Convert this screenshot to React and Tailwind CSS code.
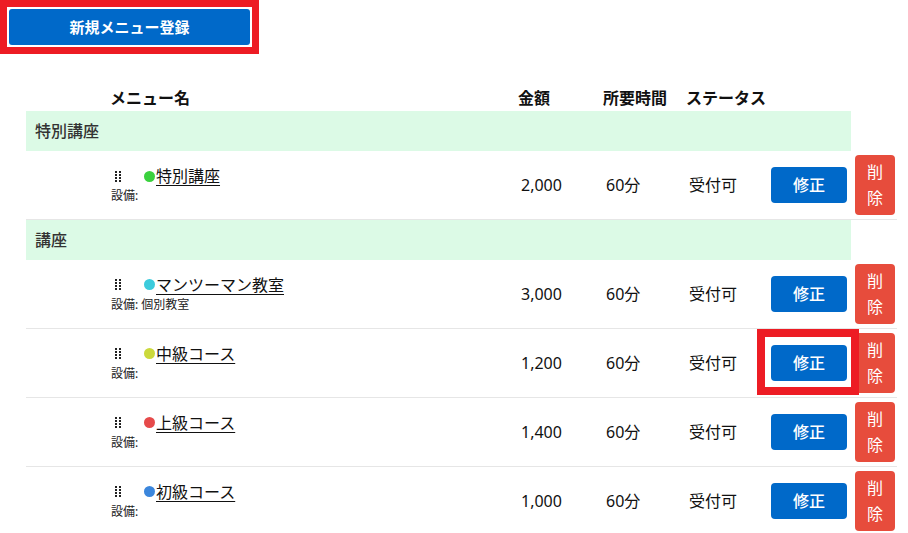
import React from "react";

const groups = [
    {
        name: "特別講座",
        items: [
            { name: "特別講座", color: "bg-[#3ad13e]", equipment: "", price: "2,000", time: "60分", status: "受付可" },
        ],
    },
    {
        name: "講座",
        items: [
            { name: "マンツーマン教室", color: "bg-[#3ccbdc]", equipment: "個別教室", price: "3,000", time: "60分", status: "受付可" },
            { name: "中級コース", color: "bg-[#cbd93c]", equipment: "", price: "1,200", time: "60分", status: "受付可", marked: true },
            { name: "上級コース", color: "bg-[#e64a4a]", equipment: "", price: "1,400", time: "60分", status: "受付可" },
            { name: "初級コース", color: "bg-[#3b86dc]", equipment: "", price: "1,000", time: "60分", status: "受付可" },
        ],
    },
];

function Handle() {
    return (
        <svg width="6" height="11" viewBox="0 0 6 11" className="inline-block">
            {[0, 3, 6, 9].map((y) => (
                <g key={y} fill="#222">
                    <rect x="0" y={y} width="2" height="2" />
                    <rect x="4" y={y} width="2" height="2" />
                </g>
            ))}
        </svg>
    );
}

export default function App() {
    return (
        <div className="w-[908px] h-[533px] overflow-hidden bg-white text-[#111] font-['Noto_Sans','Noto_Sans_CJK_JP',sans-serif]">
            <div className="w-[259px] h-[54px] p-[2px] border-[7px] border-[#ed1c24] bg-white">
                <button className="w-[241px] h-[36px] bg-[#0069c9] rounded-[3px] text-white text-[15px] font-semibold leading-none">
                    新規メニュー登録
                </button>
            </div>

            <table className="mt-[31px] ml-[26px] border-collapse text-[16px] whitespace-nowrap table-fixed w-[871px]">
                <thead>
                    <tr className="h-[26px] font-bold text-left">
                        <th className="w-[80px] p-0"></th>
                        <th className="w-[404px] p-0 pl-[4px]">メニュー名</th>
                        <th className="w-[85px] p-0 pl-[8px]">金額</th>
                        <th className="w-[83px] p-0 pl-[8px]">所要時間</th>
                        <th className="w-[88px] p-0 pl-[8px]">ステータス</th>
                        <th className="w-[85px] p-0"></th>
                        <th className="w-[46px] p-0"></th>
                    </tr>
                </thead>
                <tbody>
                    {groups.map((group) => (
                        <React.Fragment key={group.name}>
                            <tr className="h-[40px]">
                                <td colSpan={6} className="bg-[#dcfae6] pl-[9px] font-medium text-[#333]">
                                    {group.name}
                                </td>
                                <td></td>
                            </tr>
                            {group.items.map((item) => (
                                <tr key={item.name} className="border-b border-[#e6e6e6]">
                                    <td></td>
                                    <td className="pl-[5px] align-middle">
                                        <div className="flex items-center h-[20px]">
                                            <span className="ml-[4px] w-[29px] shrink-0 flex items-center"><Handle /></span>
                                            <span className={`w-[11px] h-[11px] shrink-0 rounded-full ${item.color}`}></span>
                                            <a className="ml-[1px] underline underline-offset-[3px] leading-none" href="#">{item.name}</a>
                                        </div>
                                        <div className="mt-[2px] text-[12px] text-[#222] leading-[16px]">
                                            設備:{item.equipment ? ` ${item.equipment}` : ""}
                                        </div>
                                    </td>
                                    <td className="pl-[11px]">{item.price}</td>
                                    <td className="pl-[11px]">{item.time}</td>
                                    <td className="pl-[11px]">{item.status}</td>
                                    <td className="pl-[5px]">
                                        <div className="relative w-[76px]">
                                            <button className="w-[76px] h-[36px] bg-[#0069c9] rounded-[4px] text-white text-[16px] font-medium">
                                                修正
                                            </button>
                                            {item.marked && (
                                                <div className="absolute -left-[14px] -top-[16px] w-[102px] h-[66px] border-[8px] border-[#ed1c24] pointer-events-none"></div>
                                            )}
                                        </div>
                                    </td>
                                    <td className="pl-[4px] pr-[2px] py-[4px]">
                                        <button className="w-[40px] h-[60px] bg-[#e74c3c] rounded-[4px] text-white text-[16px] leading-[26px]">
                                            削<br />除
                                        </button>
                                    </td>
                                </tr>
                            ))}
                        </React.Fragment>
                    ))}
                </tbody>
            </table>
        </div>
    );
}
